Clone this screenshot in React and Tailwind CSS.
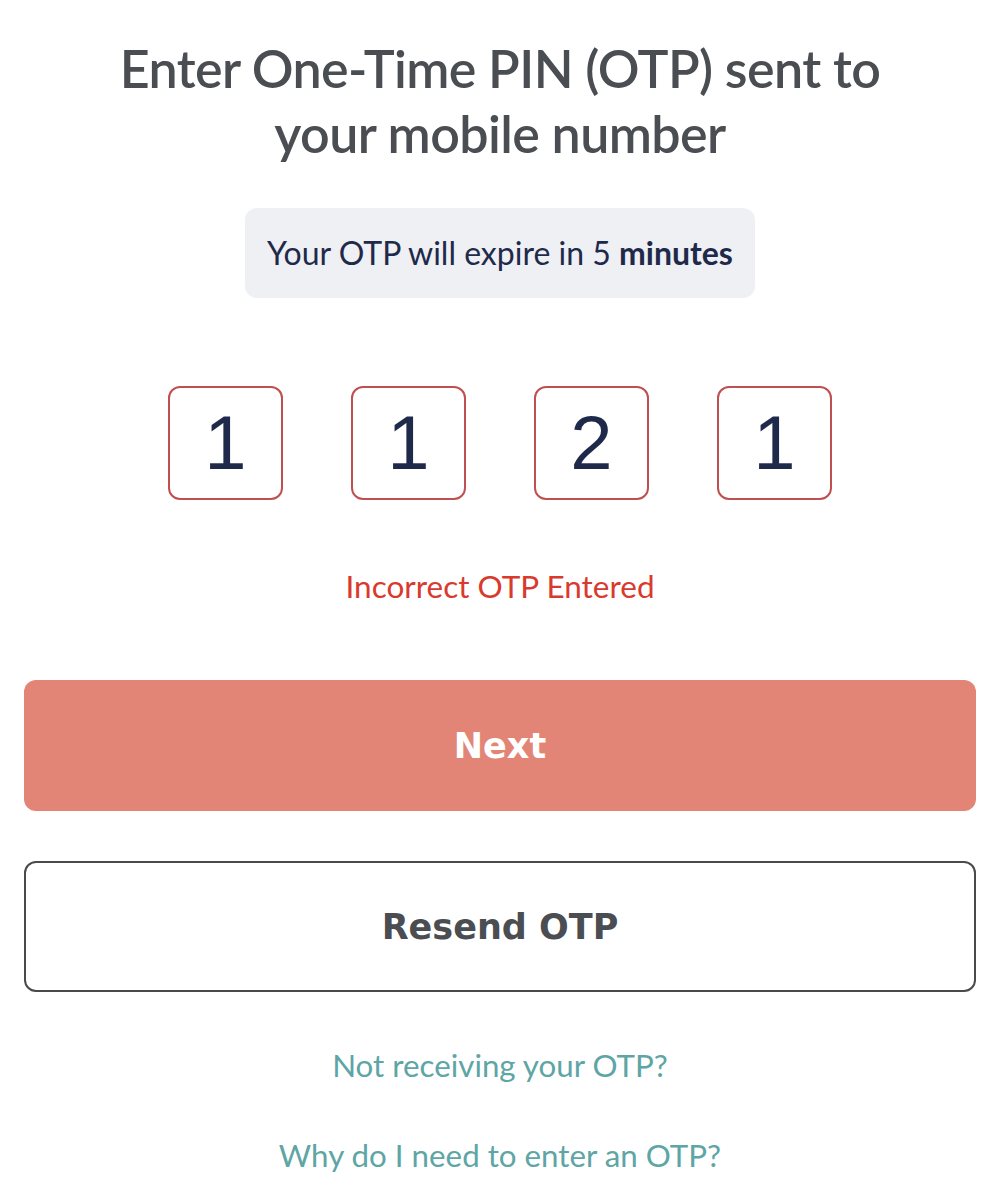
import React from 'react';

const digits = ['1', '1', '2', '1'];

export default function App() {
  return (
    <div className="min-h-screen bg-white flex flex-col items-center px-6" style={{ fontFamily: 'Lato, "Noto Sans", sans-serif' }}>
      <h1 className="mt-[36px] text-center text-[52px] leading-[65px] font-semibold text-[#4a4d52] tracking-[-0.6px]">
        Enter One-Time PIN (OTP) sent to<br />your mobile number
      </h1>

      <div className="mt-[42px] w-[510px] h-[90px] rounded-xl bg-[#eef0f4] flex items-center justify-center text-[32px] text-[#1f2a4b]">
        <span>Your OTP will expire in 5 <span className="font-bold">minutes</span></span>
      </div>

      <div className="mt-[88px] flex gap-[68px]">
        {digits.map((d, i) => (
          <div
            key={i}
            className="w-[115px] h-[114px] rounded-xl border-2 border-[#c0504f] flex items-center justify-center text-[76px] text-[#1f2a4b]"
            style={{ fontFamily: '"Liberation Sans", Arial, sans-serif' }}
          >
            {d}
          </div>
        ))}
      </div>

      <p className="mt-[63px] text-[31.5px] text-[#d93a2e]">Incorrect OTP Entered</p>

      <button className="mt-[70px] w-full h-[131px] rounded-xl bg-[#e38576] text-white text-[35px] font-bold" style={{ fontFamily: '"DejaVu Sans", sans-serif' }}>
        Next
      </button>

      <button className="mt-[50px] w-full h-[131px] rounded-xl border-2 border-[#4a4a4a] bg-white text-[#4a4d52] text-[35px] font-bold" style={{ fontFamily: '"DejaVu Sans", sans-serif' }}>
        Resend OTP
      </button>

      <a className="mt-[50px] text-[31.3px] text-[#5ea5a5]">Not receiving your OTP?</a>
      <a className="mt-[43px] text-[31.3px] text-[#5ea5a5]">Why do I need to enter an OTP?</a>
    </div>
  );
}
